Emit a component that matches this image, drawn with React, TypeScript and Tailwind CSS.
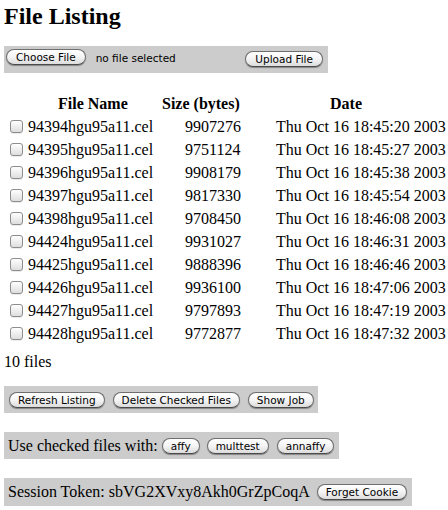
import React from "react";

const rows: [string, string, string][] = [
  ["94394hgu95a11.cel", "9907276", "Thu Oct 16 18:45:20 2003"],
  ["94395hgu95a11.cel", "9751124", "Thu Oct 16 18:45:27 2003"],
  ["94396hgu95a11.cel", "9908179", "Thu Oct 16 18:45:38 2003"],
  ["94397hgu95a11.cel", "9817330", "Thu Oct 16 18:45:54 2003"],
  ["94398hgu95a11.cel", "9708450", "Thu Oct 16 18:46:08 2003"],
  ["94424hgu95a11.cel", "9931027", "Thu Oct 16 18:46:31 2003"],
  ["94425hgu95a11.cel", "9888396", "Thu Oct 16 18:46:46 2003"],
  ["94426hgu95a11.cel", "9936100", "Thu Oct 16 18:47:06 2003"],
  ["94427hgu95a11.cel", "9797893", "Thu Oct 16 18:47:19 2003"],
  ["94428hgu95a11.cel", "9772877", "Thu Oct 16 18:47:32 2003"],
];

function Btn({ children, className = "" }: { children: React.ReactNode; className?: string }) {
  return (
    <button
      className={
        "h-[16px] px-[8px] rounded-full border border-[#6e6e6e] border-b-[#4a4a4a] bg-gradient-to-b from-white via-[#f4f4f4] to-[#dcdcdc] shadow-[0_1px_1px_rgba(0,0,0,0.35)] text-[10.5px] leading-[14px] text-black font-['DejaVu_Sans',sans-serif] whitespace-nowrap flex items-center " +
        className
      }
    >
      {children}
    </button>
  );
}

export default function App() {
  return (
    <div className="w-[448px] h-[510px] bg-white text-black font-['Liberation_Serif',serif] text-[16px] overflow-hidden">
      <div className="h-[46px] pt-[2px] pl-[4px]">
        <h1 className="text-[24px] leading-[28px] font-bold">File Listing</h1>
      </div>

      <div className="ml-[4px] w-[324px] h-[27px] bg-[#cccccc] flex items-start">
        <Btn className="mt-[3px] ml-[2px] px-[9px]">Choose File</Btn>
        <span className="mt-[5px] ml-[10px] text-[10.5px] leading-[14px] font-['DejaVu_Sans',sans-serif]">
          no file selected
        </span>
        <Btn className="mt-[5px] ml-auto mr-[5px] px-[9px]">Upload File</Btn>
      </div>

      <div className="mt-[19px]">
        <div className="h-[23px] flex items-center font-bold leading-[18px] pl-[58px]">
          <span className="w-[104px]">File Name</span>
          <span className="w-[168px]">Size (bytes)</span>
          <span>Date</span>
        </div>
        {rows.map(([name, size, date]) => (
          <div key={name} className="h-[23px] flex items-center leading-[18px] pl-[10px] whitespace-nowrap">
            <input
              type="checkbox"
              className="appearance-none w-[13px] h-[13px] mr-[5px] rounded-[3px] border border-[#8c8c8c] bg-gradient-to-b from-white to-[#dedede] shadow-[0_1px_0_rgba(0,0,0,0.08)]"
            />
            <span className="w-[157px]">{name}</span>
            <span className="w-[91px]">{size}</span>
            <span>{date}</span>
          </div>
        ))}
      </div>

      <div className="mt-[8px] pl-[4px] leading-[18px]">10 files</div>

      <div className="mt-[15px] ml-[4px] w-fit h-[27px] bg-[#cccccc] flex items-center gap-[8px] pl-[5px] pr-[4px]">
        <Btn>Refresh Listing</Btn>
        <Btn>Delete Checked Files</Btn>
        <Btn>Show Job</Btn>
      </div>

      <div className="mt-[19px] ml-[4px] w-fit h-[27px] bg-[#cccccc] flex items-center pl-[4px] pr-[5px] leading-[18px]">
        <span className="mr-[4px]">Use checked files with:</span>
        <Btn className="mr-[7px]">affy</Btn>
        <Btn className="mr-[8px]">multtest</Btn>
        <Btn>annaffy</Btn>
      </div>

      <div className="mt-[19px] ml-[4px] w-fit h-[28px] bg-[#cccccc] flex items-center pl-[4px] pr-[5px] leading-[18px]">
        <span className="mr-[7px]">Session Token: sbVG2XVxy8Akh0GrZpCoqA</span>
        <Btn>Forget Cookie</Btn>
      </div>
    </div>
  );
}
